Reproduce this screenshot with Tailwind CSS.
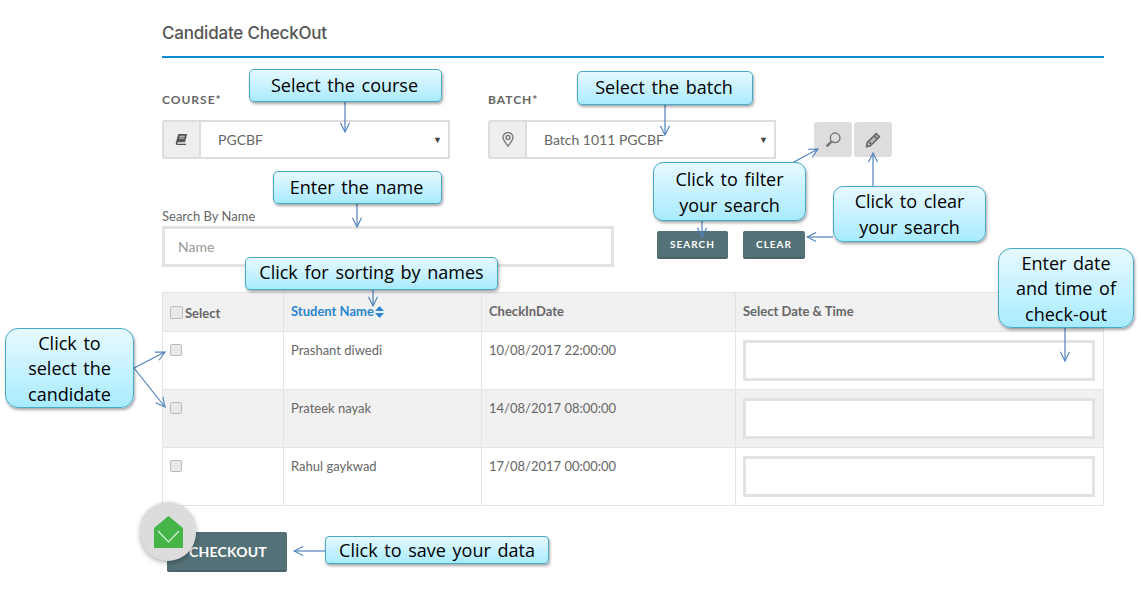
<!DOCTYPE html>
<html lang="en">
<head>
    <meta charset="UTF-8">
    <meta name="viewport" content="width=device-width, initial-scale=1.0">
    <title>Candidate CheckOut</title>
    <script src="https://cdn.jsdelivr.net/npm/@tailwindcss/browser@4"></script>
</head>
<body class="bg-white font-['Lato',sans-serif] text-[#666]">
<div class="relative w-[1141px] h-[599px] overflow-hidden">
    <main class="ml-[162px] w-[942px] pt-[22px]">
        <h1 class="text-[17px] leading-[22px] font-medium text-[#555] font-['Inter',sans-serif] tracking-[-0.2px]">Candidate CheckOut</h1>
        <div class="mt-[12px] h-[2px] bg-[#0d8bd4]"></div>

        <!-- Filters -->
        <div class="flex mt-[35px]">
            <div class="w-[288px]">
                <label class="block text-[12px] leading-[14px] font-bold tracking-[1px] text-[#666]">COURSE*</label>
                <div class="flex mt-[13px] h-[39px]">
                    <span class="w-[37px] flex items-center justify-center bg-[#eee] border-2 border-r-0 border-[#ddd] rounded-l-[3px]">
                        <svg class="w-[13px] h-[13px]" viewBox="0 0 14 14" fill="#555"><path d="M3.500 1h9.500l-2.200 9H3.200c-.9 0-.9 1.600 0 1.600h9l-.4 1.400H2.700C.9 13 .6 11.500 1 10z"/><path d="M5 3.500h5.500M4.500 5.500H10" stroke="#eee" stroke-width=".9"/></svg>
                    </span>
                    <div class="flex-1 flex items-center justify-between pl-[17px] pr-[6px] border-2 border-[#ddd] text-[14px] text-[#666]">
                        <span>PGCBF</span><span class="text-[9px] text-[#444]">▼</span>
                    </div>
                </div>
            </div>
            <div class="w-[288px] ml-[38px]">
                <label class="block text-[12px] leading-[14px] font-bold tracking-[1px] text-[#666]">BATCH*</label>
                <div class="flex mt-[13px] h-[39px]">
                    <span class="w-[37px] flex items-center justify-center bg-[#eee] border-2 border-r-0 border-[#ddd] rounded-l-[3px]">
                        <svg class="w-[12px] h-[15px]" viewBox="0 0 12 15" fill="none" stroke="#777" stroke-width="1.300"><path d="M6 14C3.500 10.500 1 8.300 1 5.500a5 5 0 0 1 10 0C11 8.300 8.500 10.500 6 14z"/><circle cx="6" cy="5.500" r="2"/></svg>
                    </span>
                    <div class="flex-1 flex items-center justify-between pl-[17px] pr-[6px] border-2 border-[#ddd] text-[14px] text-[#666]">
                        <span>Batch 1011 PGCBF</span><span class="text-[9px] text-[#444]">▼</span>
                    </div>
                </div>
            </div>
            <div class="flex gap-[2px] ml-[38px] mt-[29px]">
                <button class="w-[38px] h-[35px] bg-[#ddd] rounded-[3px] flex items-center justify-center">
                    <svg class="w-[16px] h-[16px]" viewBox="0 0 15 15" fill="none" stroke="#777" stroke-width="1.300"><circle cx="9.500" cy="5.500" r="4.500"/><path d="M6.200 8.800 1.500 13.500" stroke-width="2.400"/></svg>
                </button>
                <button class="w-[38px] h-[35px] bg-[#ddd] rounded-[3px] flex items-center justify-center">
                    <svg class="w-[16px] h-[16px]" viewBox="0 0 15 15" fill="#bbb" stroke="#666" stroke-width="1.500"><path d="M10.500 1.500 13.500 4.500 5 13 1.500 13.800 2 10z"/><path d="M8.500 3.500 11.500 6.500M4 9.500 6 11.500"/></svg>
                </button>
            </div>
        </div>

        <!-- Name search -->
        <div class="flex mt-[50px]">
            <div class="w-[452px]">
                <label class="block text-[13px] leading-[14px] text-[#666]">Search By Name</label>
                <input class="block w-full h-[41px] mt-[3px] px-[13px] border-[3px] border-[#e2e2e2] text-[14px] placeholder:text-[#999]" placeholder="Name">
            </div>
            <div class="flex ml-[43px] mt-[22px] gap-[15px] text-[10px] font-bold tracking-[1px] text-white">
                <button class="w-[71px] h-[28px] bg-[#537176] rounded-[2px] border-b-2 border-[#48636a]">SEARCH</button>
                <button class="w-[62px] h-[28px] bg-[#537176] rounded-[2px] border-b-2 border-[#48636a]">CLEAR</button>
            </div>
        </div>

        <!-- Candidates -->
        <table class="mt-[25px] w-[942px] table-fixed border-collapse text-[13px] border border-[#e4e4e4]">
            <thead>
                <tr class="h-[39px] bg-[#f1f1f1] text-left font-bold text-[#666]">
                    <th class="w-[121px] pl-[7px] border border-[#e4e4e4]"><span class="flex items-center gap-[2px]"><input type="checkbox" class="size-[13px] appearance-none bg-[#e8e8e8] border border-[#bbb] rounded-[2px]"><span class="mt-[3px]">Select</span></span></th>
                    <th class="w-[198px] pl-[7px] pb-[1px] border border-[#e4e4e4] text-[#2a86d0]">Student Name<svg class="inline w-[9px] h-[12px] ml-[1px] align-[-2px]" viewBox="0 0 9 12" fill="#2a86d0"><path d="M4.500 0 9 5H0zM0 7h9l-4.500 5z"/></svg></th>
                    <th class="w-[254px] pl-[7px] pb-[1px] border border-[#e4e4e4]">CheckInDate</th>
                    <th class="pl-[7px] pb-[1px] border border-[#e4e4e4]">Select Date &amp; Time</th>
                </tr>
            </thead>
            <tbody>
                <tr class="h-[58px]">
                    <td class="pl-[7px] pt-[12px] align-top border border-[#e4e4e4]"><input type="checkbox" class="block size-[12px] appearance-none bg-[#e8e8e8] border border-[#bbb] rounded-[2px]"></td>
                    <td class="pl-[7px] pt-[11px] align-top border border-[#e4e4e4] leading-[15px]">Prashant diwedi</td>
                    <td class="pl-[7px] pt-[11px] align-top border border-[#e4e4e4] leading-[15px]">10/08/2017 22:00:00</td>
                    <td class="pl-[7px] pr-[8px] align-middle border border-[#e4e4e4]"><input class="block w-full h-[41px] bg-white border-[3px] border-[#e2e2e2]"></td>
                </tr>
                <tr class="h-[58px] bg-[#f1f1f1]">
                    <td class="pl-[7px] pt-[12px] align-top border border-[#e4e4e4]"><input type="checkbox" class="block size-[12px] appearance-none bg-[#e8e8e8] border border-[#bbb] rounded-[2px]"></td>
                    <td class="pl-[7px] pt-[11px] align-top border border-[#e4e4e4] leading-[15px]">Prateek nayak</td>
                    <td class="pl-[7px] pt-[11px] align-top border border-[#e4e4e4] leading-[15px]">14/08/2017 08:00:00</td>
                    <td class="pl-[7px] pr-[8px] align-middle border border-[#e4e4e4]"><input class="block w-full h-[41px] bg-white border-[3px] border-[#e2e2e2]"></td>
                </tr>
                <tr class="h-[58px]">
                    <td class="pl-[7px] pt-[12px] align-top border border-[#e4e4e4]"><input type="checkbox" class="block size-[12px] appearance-none bg-[#e8e8e8] border border-[#bbb] rounded-[2px]"></td>
                    <td class="pl-[7px] pt-[11px] align-top border border-[#e4e4e4] leading-[15px]">Rahul gaykwad</td>
                    <td class="pl-[7px] pt-[11px] align-top border border-[#e4e4e4] leading-[15px]">17/08/2017 00:00:00</td>
                    <td class="pl-[7px] pr-[8px] align-middle border border-[#e4e4e4]"><input class="block w-full h-[41px] bg-white border-[3px] border-[#e2e2e2]"></td>
                </tr>
            </tbody>
        </table>

        <button class="block ml-[5px] mt-[26px] w-[120px] h-[40px] pl-[2px] bg-[#537176] rounded-[2px] border-b-2 border-[#48636a] text-white text-[14px] font-bold tracking-[0.2px]">CHECKOUT</button>
    </main>

    <!-- Floating mail badge -->
    <div class="absolute left-[140px] top-[502px] w-[56px] h-[59px] rounded-full bg-[#dcdcdc] shadow-[0_2px_5px_rgba(0,0,0,0.3)] flex items-center justify-center">
        <svg class="w-[29px] h-[32px]" viewBox="0 0 29 32"><path d="M14.500 0 29 12V32H0V12z" fill="#45b549"/><path d="M4 15 14.500 26 25 15" fill="none" stroke="#d8efd8" stroke-width="1.200"/></svg>
    </div>

    <!-- Annotation arrows -->
    <svg class="absolute inset-0 pointer-events-none" width="1141" height="599" fill="none" stroke="#4f81bd" stroke-width="1.200">
        <defs>
            <marker id="tip" viewBox="0 0 12 12" refX="11" refY="6" markerWidth="11" markerHeight="11" markerUnits="userSpaceOnUse" orient="auto">
                <path d="M1 1 11 6 1 11" fill="none" stroke="#4f81bd" stroke-width="1.200"/>
            </marker>
        </defs>
        <path d="M345 102V132" marker-end="url(#tip)"/>
        <path d="M665 105V135" marker-end="url(#tip)"/>
        <path d="M357 204V227" marker-end="url(#tip)"/>
        <path d="M792 163 818 149" marker-end="url(#tip)"/>
        <path d="M702 221V237" marker-end="url(#tip)"/>
        <path d="M873 186V153" marker-end="url(#tip)"/>
        <path d="M833 237H807" marker-end="url(#tip)"/>
        <path d="M373 290V306" marker-end="url(#tip)"/>
        <path d="M1065 328V361" marker-end="url(#tip)"/>
        <path d="M134 368 165 352" marker-end="url(#tip)"/>
        <path d="M134 368 165 407" marker-end="url(#tip)"/>
        <path d="M325 551H294" marker-end="url(#tip)"/>
    </svg>

    <!-- Annotation callouts -->
    <div class="absolute left-[249px] top-[69px] w-[193px] h-[33px] pt-[1px] pr-[2px] flex items-center justify-center text-center rounded-[5px] border border-[#46aac5] bg-gradient-to-b from-[#e6f9ff] to-[#a8ebff] shadow-[1px_2px_3px_rgba(0,0,0,0.35)] text-black text-[18px] leading-[25.500px] font-['Open_Sans',sans-serif] [word-spacing:2px]">Select the course</div>
    <div class="absolute left-[577px] top-[71px] w-[176px] h-[34px] pb-[1px] pr-[2px] flex items-center justify-center text-center rounded-[5px] border border-[#46aac5] bg-gradient-to-b from-[#e6f9ff] to-[#a8ebff] shadow-[1px_2px_3px_rgba(0,0,0,0.35)] text-black text-[18px] leading-[25.500px] font-['Open_Sans',sans-serif] [word-spacing:2px]">Select the batch</div>
    <div class="absolute left-[273px] top-[171px] w-[169px] h-[33px] pr-[2px] flex items-center justify-center text-center rounded-[5px] border border-[#46aac5] bg-gradient-to-b from-[#e6f9ff] to-[#a8ebff] shadow-[1px_2px_3px_rgba(0,0,0,0.35)] text-black text-[18px] leading-[25.500px] font-['Open_Sans',sans-serif] [word-spacing:2px]">Enter the name</div>
    <div class="absolute left-[653px] top-[162px] w-[153px] h-[59px] flex items-center justify-center text-center rounded-[10px] border border-[#46aac5] bg-gradient-to-b from-[#e6f9ff] to-[#a8ebff] shadow-[1px_2px_3px_rgba(0,0,0,0.35)] text-black text-[18px] leading-[26px] font-['Open_Sans',sans-serif] [word-spacing:2px]">Click to filter<br>your search</div>
    <div class="absolute left-[833px] top-[186px] w-[153px] h-[56px] flex items-center justify-center text-center rounded-[10px] border border-[#46aac5] bg-gradient-to-b from-[#e6f9ff] to-[#a8ebff] shadow-[1px_2px_3px_rgba(0,0,0,0.35)] text-black text-[18px] leading-[26px] font-['Open_Sans',sans-serif] [word-spacing:2px]">Click to clear<br>your search</div>
    <div class="absolute left-[245px] top-[257px] w-[253px] h-[33px] pb-[2px] flex items-center justify-center text-center rounded-[5px] border border-[#46aac5] bg-gradient-to-b from-[#e6f9ff] to-[#a8ebff] shadow-[1px_2px_3px_rgba(0,0,0,0.35)] text-black text-[18px] leading-[25.500px] font-['Open_Sans',sans-serif] [word-spacing:2px]">Click for sorting by names</div>
    <div class="absolute left-[998px] top-[248px] w-[136px] h-[80px] pt-[2px] flex items-center justify-center text-center rounded-[13px] border border-[#46aac5] bg-gradient-to-b from-[#e6f9ff] to-[#a8ebff] shadow-[1px_2px_3px_rgba(0,0,0,0.35)] text-black text-[18px] leading-[25.500px] font-['Open_Sans',sans-serif] [word-spacing:2px]">Enter date<br>and time of<br>check-out</div>
    <div class="absolute left-[5px] top-[328px] w-[129px] h-[80px] pt-[2px] flex items-center justify-center text-center rounded-[13px] border border-[#46aac5] bg-gradient-to-b from-[#e6f9ff] to-[#a8ebff] shadow-[1px_2px_3px_rgba(0,0,0,0.35)] text-black text-[18px] leading-[25.500px] font-['Open_Sans',sans-serif] [word-spacing:2px]">Click to<br>select the<br>candidate</div>
    <div class="absolute left-[325px] top-[536px] w-[224px] h-[28px] pt-[2px] flex items-center justify-center text-center rounded-[4px] border border-[#46aac5] bg-gradient-to-b from-[#e6f9ff] to-[#a8ebff] shadow-[1px_2px_3px_rgba(0,0,0,0.35)] text-black text-[18px] leading-[25.500px] font-['Open_Sans',sans-serif] [word-spacing:2px]">Click to save your data</div>
</div>
</body>
</html>
